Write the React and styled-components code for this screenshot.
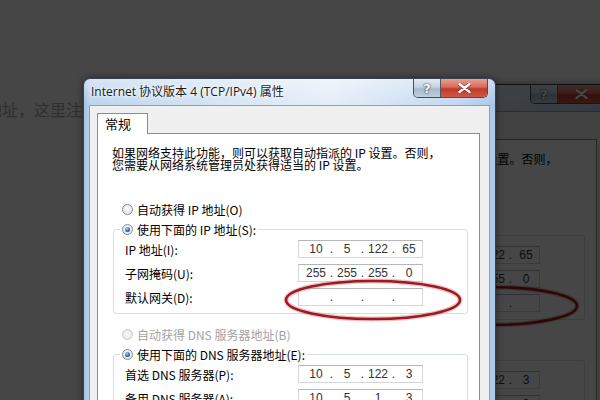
import React from 'react';
import styled, { createGlobalStyle } from 'styled-components';

const GlobalStyle = createGlobalStyle`
  html, body { margin: 0; padding: 0; }
  body { width: 600px; height: 400px; overflow: hidden; background: #464646; }
`;

const Desktop = styled.div`
  position: relative;
  width: 600px;
  height: 400px;
  overflow: hidden;
  background: #fff;
  font-family: "Noto Sans CJK SC", "Liberation Sans", sans-serif;
`;

const PageText = styled.p`
  margin: 0;
  padding-top: 99px;
  text-indent: -14px;
  font-size: 16px;
  line-height: 20px;
  color: #a6a6a6;
`;

const Dim = styled.div`
  position: absolute;
  inset: 0;
  background: rgba(0, 0, 0, 0.725);
`;

const Frame = styled.div`
  position: absolute;
  isolation: isolate;
  left: ${(p) => p.$x}px;
  top: ${(p) => p.$y}px;
  width: 413px;
  height: 340px;
  box-sizing: border-box;
  display: flex;
  flex-direction: column;
  padding: 0 5px;
  border: 1px solid #35424f;
  border-bottom: none;
  border-radius: 7px 7px 0 0;
  background:
    linear-gradient(180deg, rgba(255, 255, 255, 0.4), rgba(255, 255, 255, 0) 26px),
    linear-gradient(90deg, #a3c2e5 0, #bcd4ee 6px, #d6e4f4 35%, #e4eef9 60%, #c0d6ef 92%, #a9c7e8 100%);
  box-shadow: 0 0 7px rgba(0, 0, 0, 0.45);
`;

const TitleBar = styled.div`
  display: flex;
  align-items: flex-start;
  height: 26px;
  padding-left: 2px;
`;

const Title = styled.div`
  flex: 1;
  font-family: "Open Sans", "Noto Sans CJK SC", sans-serif;
  font-size: 12px;
  line-height: 26px;
  color: #1a1a1a;
  text-shadow: 0 0 6px #fff, 0 0 3px #fff;
  white-space: nowrap;
`;

const Buttons = styled.div`
  display: flex;
  margin-right: 2px;
  height: 18px;
  border: 1px solid #3f4e60;
  border-top: none;
  border-radius: 0 0 5px 5px;
  overflow: hidden;
`;

const CapButton = styled.div`
  width: ${(p) => p.$w}px;
  display: flex;
  align-items: center;
  justify-content: center;
  font-family: "DejaVu Sans", sans-serif;
  font-weight: bold;
  font-size: 13px;
  color: #fff;
  text-shadow: 0 0 2px #2b3a4c, 0 0 1px #2b3a4c;
  background: ${(p) =>
    p.$close
      ? 'linear-gradient(180deg, #e8a093 0, #d66a58 45%, #c1392a 55%, #cf5a43 100%)'
      : 'linear-gradient(180deg, #e3ebf4 0, #c4d2e2 45%, #a7b9cd 55%, #bfcfe0 100%)'};
  & + & {
    border-left: 1px solid #4d5a6b;
  }
`;

const Client = styled.div`
  flex: 1;
  display: flex;
  flex-direction: column;
  padding: 7px 9px 0 7px;
  border: 1px solid #8ca1b8;
  border-bottom: none;
  background: #f0f0f0;
`;

const Tab = styled.div`
  position: relative;
  z-index: 1;
  width: 51px;
  height: 21px;
  box-sizing: border-box;
  margin-bottom: -1px;
  padding-left: 7px;
  border: 1px solid #898c95;
  border-bottom: none;
  background: #fff;
  font-size: 13px;
  line-height: 20px;
  color: #000;
`;

const Panel = styled.div`
  flex: 1;
  padding: 13px 11px 0 15px;
  border: 1px solid #898c95;
  border-bottom: none;
  background: #fff;
`;

const Desc = styled.p`
  margin: 0 0 28px -1px;
  font-size: 12px;
  line-height: 12px;
  color: #000;
  white-space: nowrap;
`;

const RadioRow = styled.div`
  display: flex;
  align-items: center;
  gap: 4px;
  height: 20px;
  margin-left: ${(p) => p.$inset || 0}px;
  margin-top: ${(p) => p.$top || 0}px;
  font-size: 12px;
  color: ${(p) => (p.$disabled ? '#a2a2a2' : '#000')};
  white-space: nowrap;
`;

const Radio = styled.span`
  width: 11px;
  height: 11px;
  box-sizing: border-box;
  border-radius: 50%;
  border: 1px solid ${(p) => (p.$disabled ? '#c8c8c8' : '#8a8d91')};
  background: ${(p) =>
    p.$disabled
      ? 'radial-gradient(circle at 50% 50%, #f7f7f7, #e4e4e4)'
      : 'radial-gradient(circle at 50% 40%, #ffffff, #d8dadd)'};
  display: flex;
  align-items: center;
  justify-content: center;
  &::after {
    content: '';
    display: ${(p) => (p.$checked ? 'block' : 'none')};
    width: 5px;
    height: 5px;
    border-radius: 50%;
    background: radial-gradient(circle at 40% 35%, #b5e2fa 0, #3d8ac8 40%, #0d3154 90%);
  }
`;

const Group = styled.fieldset`
  margin: 0;
  min-inline-size: 0;
  padding: 1px 0 7px 0;
  border: 1px solid #d5dfe5;
  border-radius: 3px;
`;

const Legend = styled.legend`
  margin-left: 6px;
  padding: 0 2px;
`;

const Rows = styled.div`
  display: flex;
  flex-direction: column;
  gap: 6px;
`;

const FieldRow = styled.div`
  display: grid;
  grid-template-columns: 173px 125px;
  align-items: center;
  height: 18px;
  padding-left: 11px;
  font-size: 12px;
  color: #000;
  white-space: nowrap;
`;

const IpField = styled.div`
  display: grid;
  grid-template-columns: 26px 5px 26px 5px 26px 5px 26px;
  align-items: center;
  box-sizing: border-box;
  width: 125px;
  height: 18px;
  padding-left: 4px;
  border: 1px solid #d3d6db;
  border-top-color: #b3b6bc;
  background: #fff;
  font-family: "Liberation Sans", Arial, sans-serif;
  font-size: 12px;
  color: #333;
  text-align: center;
`;

const Mark = styled.svg`
  position: absolute;
  left: 195px;
  top: 196px;
  overflow: visible;
`;

const IpBox = ({ parts }) => (
  <IpField>
    {parts.map((v, i) => (
      <React.Fragment key={i}>
        {i > 0 && <span>.</span>}
        <span>{v}</span>
      </React.Fragment>
    ))}
  </IpField>
);

const Field = ({ label, parts }) => (
  <FieldRow>
    <span>{label}</span>
    <IpBox parts={parts} />
  </FieldRow>
);

const Dialog = ({ x, y }) => (
  <Frame $x={x} $y={y}>
    <TitleBar>
      <Title>Internet 协议版本 4 (TCP/IPv4) 属性</Title>
      <Buttons>
        <CapButton $w={26}>?</CapButton>
        <CapButton $w={46} $close>
          <svg width="13" height="10" viewBox="0 0 13 10">
            <path d="M1.5 1 L11.5 9 M11.5 1 L1.5 9" stroke="#4a1a14" strokeWidth="4" strokeLinecap="round" opacity="0.55" />
            <path d="M1.5 1 L11.5 9 M11.5 1 L1.5 9" stroke="#fff" strokeWidth="2.4" strokeLinecap="round" />
          </svg>
        </CapButton>
      </Buttons>
    </TitleBar>
    <Client>
      <Tab>常规</Tab>
      <Panel>
        <Desc>
          如果网络支持此功能，则可以获取自动指派的 IP 设置。否则，
          <br />
          您需要从网络系统管理员处获得适当的 IP 设置。
        </Desc>
        <RadioRow $inset={9}>
          <Radio />
          自动获得 IP 地址(O)
        </RadioRow>
        <Group>
          <Legend>
            <RadioRow>
              <Radio $checked />
              使用下面的 IP 地址(S):
            </RadioRow>
          </Legend>
          <Rows>
            <Field label="IP 地址(I):" parts={['10', '5', '122', '65']} />
            <Field label="子网掩码(U):" parts={['255', '255', '255', '0']} />
            <Field label="默认网关(D):" parts={['', '', '', '']} />
          </Rows>
        </Group>
        <RadioRow $inset={9} $top={10} $disabled>
          <Radio $disabled />
          自动获得 DNS 服务器地址(B)
        </RadioRow>
        <Group>
          <Legend>
            <RadioRow>
              <Radio $checked />
              使用下面的 DNS 服务器地址(E):
            </RadioRow>
          </Legend>
          <Rows>
            <Field label="首选 DNS 服务器(P):" parts={['10', '5', '122', '3']} />
            <Field label="备用 DNS 服务器(A):" parts={['10', '5', '1', '3']} />
          </Rows>
        </Group>
      </Panel>
    </Client>
    <Mark width="190" height="50">
      <ellipse cx="94" cy="25" rx="87" ry="19" fill="none" stroke="#d98a8d" strokeWidth="5" opacity="0.5" />
      <ellipse cx="94" cy="25" rx="87" ry="19" fill="none" stroke="#9c1a20" strokeWidth="2.6" />
    </Mark>
  </Frame>
);

export default function App() {
  return (
    <>
      <GlobalStyle />
      <Desktop>
        <PageText>地址，这里注意</PageText>
        <Dialog x={200} y={84} />
        <Dim />
        <Dialog x={83} y={78} />
      </Desktop>
    </>
  );
}
